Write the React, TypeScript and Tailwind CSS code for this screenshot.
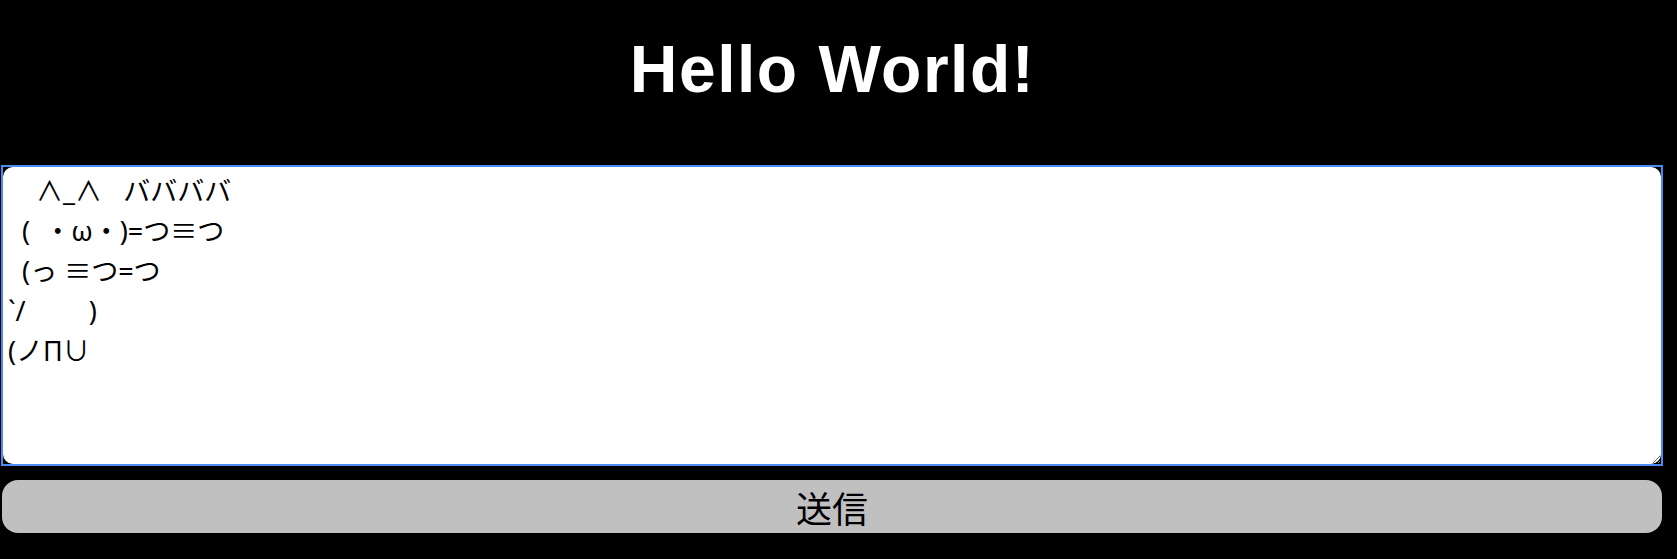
import React from 'react';

const aa = [
  '    ∧_∧   ババババ',
  '  (  ・ω・)=つ≡つ',
  '  (っ ≡つ=つ',
  '`/         )',
  '(ノΠ∪',
].join('\n');

export default function App() {
  return (
    <div className="min-h-screen bg-black">
      <h1 className="pt-[31px] pr-[12px] text-center font-['Liberation_Sans',Arial,sans-serif] text-[66px] leading-[76px] font-bold tracking-[1.5px] text-white">
        Hello World!
      </h1>

      <div className="mt-[58px] ml-[1px] w-[1662px] border-2 border-[#4b8bf5] bg-black">
        <textarea
          className="block h-[297px] w-full rounded-[10px] bg-white pt-[4px] pl-[5px] font-['Noto_Sans','Noto_Sans_CJK_JP',sans-serif] text-[27px] leading-[40px] text-black outline-none"
          defaultValue={aa}
        />
      </div>

      <button className="mt-[14px] ml-[2px] flex h-[53px] w-[1660px] items-center justify-center rounded-[16px] bg-[#c0c0c0] font-['Noto_Sans_CJK_JP',sans-serif] text-[36px] text-black">
        送信
      </button>
    </div>
  );
}
